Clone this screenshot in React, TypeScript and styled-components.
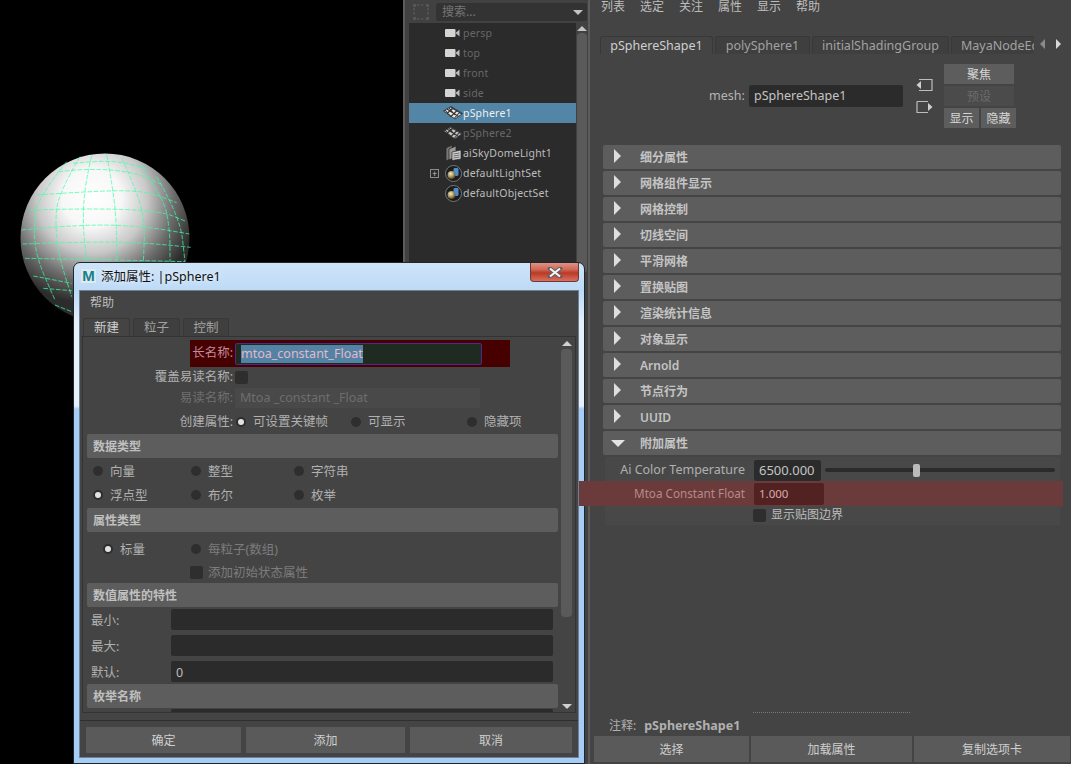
import React from 'react';

import styled, { createGlobalStyle } from 'styled-components';

const UI_FONT = '"Noto Sans", "Noto Sans CJK SC", sans-serif';

const GlobalStyle = createGlobalStyle`
  html, body {
    background: #000;
    margin: 0;
    overflow: hidden;
    padding: 0;
  }
  * {
    box-sizing: border-box;
  }
`;

const OUTLINER_ITEMS = [
  { name: 'persp', icon: 'camera', dim: true },
  { name: 'top', icon: 'camera', dim: true },
  { name: 'front', icon: 'camera', dim: true },
  { name: 'side', icon: 'camera', dim: true },
  { name: 'pSphere1', icon: 'mesh', selected: true },
  { name: 'pSphere2', icon: 'mesh', dim: true },
  { name: 'aiSkyDomeLight1', icon: 'light' },
  { name: 'defaultLightSet', icon: 'set', expandable: true },
  { name: 'defaultObjectSet', icon: 'set' },
];

const FRAMES = [
  '细分属性',
  '网格组件显示',
  '网格控制',
  '切线空间',
  '平滑网格',
  '置换贴图',
  '渲染统计信息',
  '对象显示',
  'Arnold',
  '节点行为',
  'UUID',
];

const ATTR_TABS = [
  { label: 'pSphereShape1', width: 113, active: true },
  { label: 'polySphere1', width: 95 },
  { label: 'initialShadingGroup', width: 137 },
  { label: 'MayaNodeEditorSavedTabsInfo', width: 204 },
];

// wire lines of the sphere, traced in 3x coordinates
const WIRE_LINES = [
  [[240, 80], [175, 190], [165, 285], [180, 390], [215, 500]],
  [[275, 78], [255, 160], [248, 280], [260, 395]],
  [[320, 75], [340, 180], [350, 290], [350, 395]],
  [[365, 85], [415, 190], [435, 290], [430, 395]],
  [[420, 105], [490, 200], [510, 300], [510, 395]],
  [[470, 140], [540, 260], [555, 395]],
  [[200, 95], [115, 200], [100, 290], [110, 385], [165, 510]],
  [[65, 300], [250, 282], [440, 290], [568, 312]],
  [[68, 342], [260, 335], [430, 338], [572, 352]],
  [[90, 240], [260, 235], [480, 242], [560, 275]],
  [[110, 195], [250, 185], [430, 180], [530, 218]],
  [[175, 125], [260, 115], [400, 125], [490, 165]],
  [[220, 100], [300, 92], [380, 98], [440, 118]],
  [[75, 385], [260, 388], [555, 395]],
  [[100, 438], [215, 460]],
  [[130, 475], [215, 482]],
  [[165, 525], [215, 545]],
];

const toPath = (points: number[][]): string => {
  let d = `M${points[0][0]} ${points[0][1]}`;
  for (let i = 1; i < points.length - 1; i++) {
    const midX = (points[i][0] + points[i + 1][0]) / 2;
    const midY = (points[i][1] + points[i + 1][1]) / 2;
    d += ` Q${points[i][0]} ${points[i][1]} ${midX} ${midY}`;
  }
  const last = points[points.length - 1];
  return `${d} L${last[0]} ${last[1]}`;
};

const SphereDrawing = () => (
  <StyledSphereSvg width="403" height="764" viewBox="0 0 403 764">
    <defs>
      <radialGradient
        id="sphereShade"
        gradientUnits="userSpaceOnUse"
        cx="92"
        cy="198"
        r="106"
      >
        <stop offset="0" stopColor="#ffffff" />
        <stop offset="0.28" stopColor="#f7f7f7" />
        <stop offset="0.52" stopColor="#c8c8c8" />
        <stop offset="0.78" stopColor="#6a6a6a" />
        <stop offset="1" stopColor="#2c2c2c" />
      </radialGradient>
    </defs>
    <circle cx="105" cy="238" r="84.5" fill="url(#sphereShade)" />
    <g transform="translate(0 130) scale(0.3333)">
      {WIRE_LINES.map((points, index) => (
        <path
          key={index}
          d={toPath(points)}
          fill="none"
          stroke="#3effa6"
          strokeWidth="2.2"
          strokeDasharray="14 5"
        />
      ))}
    </g>
  </StyledSphereSvg>
);

const OutlinerIcon = ({ type }: { type: string }) => {
  if (type === 'camera') {
    return (
      <svg width="16" height="12" viewBox="0 0 16 12">
        <rect x="0" y="2" width="10.5" height="8" rx="1" fill="#d4d4d4" />
        <path d="M10.5 6 L14.5 2.5 V9.5 Z" fill="#bdbdbd" />
      </svg>
    );
  }
  if (type === 'mesh') {
    return (
      <svg width="20" height="14" viewBox="0 0 20 14">
        <path d="M0.5 5 L8 0.5 L19.5 7.5 L12 13 Z" fill="#e8e8e8" stroke="#222" strokeWidth="0.8" />
        <path
          d="M4 3 L15.5 10.5 M7.5 1 L19 8 M2 4 L8 11 M6 2 L12 9 M10 2 L4 7.5 M14 4.5 L8 10.5 M17 6 L11.5 12"
          stroke="#333"
          strokeWidth="1.1"
        />
      </svg>
    );
  }
  if (type === 'light') {
    return (
      <svg width="17" height="18" viewBox="0 0 17 18">
        <path d="M1 4 L7 1 V14 L1 17 Z" fill="#777" stroke="#222" strokeWidth="0.7" />
        <path d="M4 5 L11 2 V13 L4 16 Z" fill="#999" stroke="#222" strokeWidth="0.7" />
        <path d="M7 8 L16 6 V15 L7 16.5 Z" fill="#cfcfcf" stroke="#222" strokeWidth="0.7" />
        <path d="M8.5 10 L14.5 9 M8.5 12 L14.5 11 M8.5 14 L14.5 13" stroke="#555" strokeWidth="0.8" />
      </svg>
    );
  }
  return (
    <svg width="17" height="17" viewBox="0 0 17 17">
      <defs>
        <radialGradient id="setBall" cx="0.4" cy="0.35" r="0.7">
          <stop offset="0" stopColor="#f4ecc8" />
          <stop offset="0.55" stopColor="#a8955a" />
          <stop offset="1" stopColor="#4a3f20" />
        </radialGradient>
      </defs>
      <circle cx="8.5" cy="8.5" r="8" fill="#1d1d1d" stroke="#8a8a8a" strokeWidth="0.8" />
      <rect x="8.5" y="3" width="5" height="8" rx="1.4" fill="#4f8fc9" />
      <circle cx="6.5" cy="10" r="3.9" fill="url(#setBall)" />
    </svg>
  );
};

const SnapIcon = () => (
  <svg width="18" height="18" viewBox="0 0 18 18">
    <path
      d="M5 2 H13 M5 16 H13 M2 5 V13 M16 5 V13"
      stroke="#565656"
      strokeWidth="1.6"
      strokeDasharray="2.5 1.5"
      fill="none"
    />
    <path d="M1 1 H4 V4 H1 Z M14 1 H17 V4 H14 Z M1 14 H4 V17 H1 Z M14 14 H17 V17 H14 Z" fill="#565656" />
  </svg>
);

const PortIcon = ({ flip }: { flip?: boolean }) => (
  <svg width="17" height="14" viewBox="0 0 17 14">
    {flip ? (
      <>
        <path d="M1 1.5 H12 M1 1.5 V12.5 H12" fill="none" stroke="#bdbdbd" strokeWidth="1.2" />
        <path d="M12 3 L16.5 7 L12 11 Z" fill="#d0d0d0" />
      </>
    ) : (
      <>
        <path d="M3 1.5 H16 V12.5 H3" fill="none" stroke="#bdbdbd" strokeWidth="1.2" />
        <path d="M5 3 L0.5 7 L5 11 Z" fill="#d0d0d0" />
      </>
    )}
  </svg>
);

const Outliner = () => (
  <StyledOutliner>
    <StyledSearchRow>
      <StyledSnapSlot>
        <SnapIcon />
      </StyledSnapSlot>
      <StyledSearchBox>
        搜索...
        <StyledCaret $size={5} $color="#c4c4c4" />
      </StyledSearchBox>
    </StyledSearchRow>
    <StyledTreeArea>
      <StyledTree>
        {OUTLINER_ITEMS.map((item) => (
          <StyledTreeRow key={item.name} $selected={item.selected}>
            <StyledExpandSlot>
              {item.expandable && <StyledPlusBox>+</StyledPlusBox>}
            </StyledExpandSlot>
            <StyledTreeIcon $dim={item.dim && item.icon === 'mesh'}>
              <OutlinerIcon type={item.icon} />
            </StyledTreeIcon>
            <StyledTreeLabel $dim={item.dim} $selected={item.selected}>
              {item.name}
            </StyledTreeLabel>
          </StyledTreeRow>
        ))}
      </StyledTree>
      <StyledOutlinerScroll>
        <StyledCaretUp $size={5} $color="#c4c4c4" />
        <StyledOutlinerThumb />
      </StyledOutlinerScroll>
    </StyledTreeArea>
  </StyledOutliner>
);

const AttributeEditor = () => (
  <StyledAttrPanel>
    <StyledAttrMenu>
      {['列表', '选定', '关注', '属性', '显示', '帮助'].map((label) => (
        <span key={label}>{label}</span>
      ))}
    </StyledAttrMenu>
    <StyledAttrTabRow>
      <StyledAttrTabs>
        {ATTR_TABS.map((tab) => (
          <StyledTab key={tab.label} $active={tab.active} $width={tab.width}>
            {tab.label}
          </StyledTab>
        ))}
      </StyledAttrTabs>
      <StyledTabArrows>
        <StyledCaretLeft $size={5} $color="#8a8a8a" />
        <StyledCaretRight $size={5} $color="#d8d8d8" />
      </StyledTabArrows>
    </StyledAttrTabRow>
    <StyledNodeHeader>
      <StyledNodeLabel>mesh:</StyledNodeLabel>
      <StyledNodeField>pSphereShape1</StyledNodeField>
      <StyledPortColumn>
        <PortIcon />
        <PortIcon flip />
      </StyledPortColumn>
      <StyledNodeButtons>
        <StyledSmallButton $wide>聚焦</StyledSmallButton>
        <StyledSmallButton $wide $disabled>
          预设
        </StyledSmallButton>
        <StyledSmallButton>显示</StyledSmallButton>
        <StyledSmallButton>隐藏</StyledSmallButton>
      </StyledNodeButtons>
    </StyledNodeHeader>
    <StyledFrameList>
      {FRAMES.map((label) => (
        <StyledFrame key={label}>
          <StyledFrameArrow>
            <StyledCaretRight $size={7} $color="#dedede" />
          </StyledFrameArrow>
          {label}
        </StyledFrame>
      ))}
      <StyledFrame>
        <StyledOpenArrow>
          <StyledCaret $size={7} $color="#e4e4e4" />
        </StyledOpenArrow>
        附加属性
      </StyledFrame>
      <StyledExtraSection>
        <StyledAttrRow>
          <StyledAttrLabel>Ai Color Temperature</StyledAttrLabel>
          <StyledAttrValue>6500.000</StyledAttrValue>
          <StyledSlider>
            <StyledSliderThumb />
          </StyledSlider>
        </StyledAttrRow>
        <StyledKeyedRow>
          <StyledAttrLabel $keyed>Mtoa Constant Float</StyledAttrLabel>
          <StyledAttrValue $keyed>1.000</StyledAttrValue>
        </StyledKeyedRow>
        <StyledCheckRow>
          <StyledCheckbox />
          显示贴图边界
        </StyledCheckRow>
      </StyledExtraSection>
    </StyledFrameList>
    <StyledAttrFooter>
      <StyledDots />
      <StyledNote>
        注释:<b>pSphereShape1</b>
      </StyledNote>
      <StyledFooterButtons>
        <StyledWideButton>选择</StyledWideButton>
        <StyledWideButton>加载属性</StyledWideButton>
        <StyledWideButton>复制选项卡</StyledWideButton>
      </StyledFooterButtons>
    </StyledAttrFooter>
  </StyledAttrPanel>
);

const AddAttributeDialog = () => (
  <StyledWindow>
    <StyledTitleBar>
      <StyledLogo>M</StyledLogo>
      <StyledTitle>添加属性: |pSphere1</StyledTitle>
      <StyledCloseButton>
        <svg width="16" height="11" viewBox="0 0 16 11">
          <path
            d="M3 1.5 L13 9.5 M13 1.5 L3 9.5"
            stroke="#5a5f68"
            strokeWidth="4"
            strokeLinecap="square"
          />
          <path d="M3 1.5 L13 9.5 M13 1.5 L3 9.5" stroke="#f4f4f4" strokeWidth="2.2" />
        </svg>
      </StyledCloseButton>
    </StyledTitleBar>
    <StyledClient>
      <StyledDialogMenu>帮助</StyledDialogMenu>
      <StyledDialogTabs>
        <StyledTab $active $width={47}>
          新建
        </StyledTab>
        <StyledTab $width={47}>粒子</StyledTab>
        <StyledTab $width={46}>控制</StyledTab>
      </StyledDialogTabs>
      <StyledDialogBody>
        <StyledForm>
          <StyledHighlight>
            <StyledHighlightLabel>长名称:</StyledHighlightLabel>
            <StyledNameField>
              <StyledSelectedText>mtoa_constant_Float</StyledSelectedText>
            </StyledNameField>
          </StyledHighlight>
          <StyledFormRow>
            <StyledFormLabel>覆盖易读名称:</StyledFormLabel>
            <StyledCheckbox />
          </StyledFormRow>
          <StyledFormRow $top={1}>
            <StyledFormLabel $disabled>易读名称:</StyledFormLabel>
            <StyledNiceField>Mtoa _constant _Float</StyledNiceField>
          </StyledFormRow>
          <StyledFormRow $top={4}>
            <StyledFormLabel>创建属性:</StyledFormLabel>
            <StyledRadioGrid $columns="115px 116px 1fr">
              <StyledRadioItem>
                <StyledRadio $checked />
                可设置关键帧
              </StyledRadioItem>
              <StyledRadioItem>
                <StyledRadio />
                可显示
              </StyledRadioItem>
              <StyledRadioItem>
                <StyledRadio />
                隐藏项
              </StyledRadioItem>
            </StyledRadioGrid>
          </StyledFormRow>
          <StyledFormFrame $top={2}>数据类型</StyledFormFrame>
          <StyledRadioBlock $left={10} $top={3} $columns="98px 103px 1fr">
            <StyledRadioItem>
              <StyledRadio />
              <StyledRadioText>向量</StyledRadioText>
            </StyledRadioItem>
            <StyledRadioItem>
              <StyledRadio />
              <StyledRadioText>整型</StyledRadioText>
            </StyledRadioItem>
            <StyledRadioItem>
              <StyledRadio />
              <StyledRadioText>字符串</StyledRadioText>
            </StyledRadioItem>
            <StyledRadioItem>
              <StyledRadio $checked />
              <StyledRadioText>浮点型</StyledRadioText>
            </StyledRadioItem>
            <StyledRadioItem>
              <StyledRadio />
              <StyledRadioText>布尔</StyledRadioText>
            </StyledRadioItem>
            <StyledRadioItem>
              <StyledRadio />
              <StyledRadioText>枚举</StyledRadioText>
            </StyledRadioItem>
          </StyledRadioBlock>
          <StyledFormFrame $top={3}>属性类型</StyledFormFrame>
          <StyledRadioBlock $left={20} $top={7} $columns="88px 1fr">
            <StyledRadioItem>
              <StyledRadio $checked />
              <StyledRadioText>标量</StyledRadioText>
            </StyledRadioItem>
            <StyledRadioItem $disabled>
              <StyledRadio />
              <StyledRadioText>每粒子(数组)</StyledRadioText>
            </StyledRadioItem>
          </StyledRadioBlock>
          <StyledInitialStateRow>
            <StyledCheckbox />
            <StyledRadioText>添加初始状态属性</StyledRadioText>
          </StyledInitialStateRow>
          <StyledFormFrame $top={1}>数值属性的特性</StyledFormFrame>
          <StyledRangeRow $top={2}>
            <StyledRangeLabel>最小:</StyledRangeLabel>
            <StyledRangeField />
          </StyledRangeRow>
          <StyledRangeRow $top={5}>
            <StyledRangeLabel>最大:</StyledRangeLabel>
            <StyledRangeField />
          </StyledRangeRow>
          <StyledRangeRow $top={5}>
            <StyledRangeLabel>默认:</StyledRangeLabel>
            <StyledRangeField>0</StyledRangeField>
          </StyledRangeRow>
          <StyledFormFrame $top={2}>枚举名称</StyledFormFrame>
          <StyledRangeRow $top={1}>
            <span />
            <StyledRangeField />
          </StyledRangeRow>
        </StyledForm>
        <StyledDialogScroll>
          <StyledCaretUp $size={5} $color="#d0d0d0" />
          <StyledDialogThumb />
          <StyledCaret $size={5} $color="#d0d0d0" />
        </StyledDialogScroll>
      </StyledDialogBody>
      <StyledDialogFooter>
        <StyledWideButton>确定</StyledWideButton>
        <StyledWideButton>添加</StyledWideButton>
        <StyledWideButton>取消</StyledWideButton>
      </StyledDialogFooter>
    </StyledClient>
  </StyledWindow>
);

const App = (): JSX.Element => (
  <>
    <GlobalStyle />
    <StyledDesktop>
      <StyledViewport>
        <SphereDrawing />
      </StyledViewport>
      <Outliner />
      <AttributeEditor />
      <AddAttributeDialog />
    </StyledDesktop>
  </>
);

const StyledDesktop = styled.div`
  color: #bdbdbd;
  display: grid;
  font-family: ${UI_FONT};
  font-size: 12px;
  grid-template-columns: 403px 187px 481px;
  height: 764px;
  line-height: 1;
  overflow: hidden;
  position: relative;
  width: 1071px;
`;

const StyledViewport = styled.div`
  background: #000;
  position: relative;
`;

const StyledSphereSvg = styled.svg`
  display: block;
`;

const StyledCaret = styled.i<{ $size: number; $color: string }>`
  border-left: ${({ $size }) => $size}px solid transparent;
  border-right: ${({ $size }) => $size}px solid transparent;
  border-top: ${({ $size }) => $size}px solid ${({ $color }) => $color};
  display: block;
  height: 0;
  width: 0;
`;

const StyledCaretUp = styled.i<{ $size: number; $color: string }>`
  border-bottom: ${({ $size }) => $size}px solid ${({ $color }) => $color};
  border-left: ${({ $size }) => $size}px solid transparent;
  border-right: ${({ $size }) => $size}px solid transparent;
  display: block;
  height: 0;
  width: 0;
`;

const StyledCaretRight = styled.i<{ $size: number; $color: string }>`
  border-bottom: ${({ $size }) => $size}px solid transparent;
  border-left: ${({ $size }) => $size}px solid ${({ $color }) => $color};
  border-top: ${({ $size }) => $size}px solid transparent;
  display: block;
  height: 0;
  width: 0;
`;

const StyledCaretLeft = styled.i<{ $size: number; $color: string }>`
  border-bottom: ${({ $size }) => $size}px solid transparent;
  border-right: ${({ $size }) => $size}px solid ${({ $color }) => $color};
  border-top: ${({ $size }) => $size}px solid transparent;
  display: block;
  height: 0;
  width: 0;
`;

/* outliner */

const StyledOutliner = styled.div`
  background: #414141;
  border-left: 2px solid #5c5c5c;
  border-right: 2px solid #5c5c5c;
  display: flex;
  flex-direction: column;
  height: 764px;
  padding-left: 4px;
`;

const StyledSearchRow = styled.div`
  align-items: center;
  display: flex;
  height: 23px;
  padding-top: 1px;
`;

const StyledSnapSlot = styled.div`
  display: flex;
  justify-content: center;
  width: 27px;
  padding-right: 4px;
`;

const StyledSearchBox = styled.div`
  align-items: center;
  background: #333333;
  border-radius: 2px;
  color: #767676;
  display: flex;
  font-size: 12px;
  height: 18px;
  justify-content: space-between;
  padding: 0 4px 0 6px;
  width: 151px;
`;

const StyledTreeArea = styled.div`
  display: flex;
  flex: 1;
`;

const StyledTree = styled.div`
  background: #2b2b2b;
  width: 168px;
`;

const StyledTreeRow = styled.div<{ $selected?: boolean }>`
  align-items: center;
  background: ${({ $selected }) => ($selected ? '#5285a6' : 'transparent')};
  display: flex;
  height: 20px;
  padding-left: 21px;
`;

const StyledExpandSlot = styled.div`
  flex: 0 0 13px;
`;

const StyledPlusBox = styled.div`
  align-items: center;
  border: 1px solid #8c8c8c;
  color: #bdbdbd;
  display: flex;
  font-size: 9px;
  height: 9px;
  justify-content: center;
  width: 9px;
`;

const StyledTreeIcon = styled.div<{ $dim?: boolean }>`
  align-items: center;
  display: flex;
  flex: 0 0 20px;
  height: 20px;
  justify-content: center;
  opacity: ${({ $dim }) => ($dim ? 0.8 : 1)};
`;

const StyledTreeLabel = styled.span<{ $dim?: boolean; $selected?: boolean }>`
  color: ${({ $dim, $selected }) =>
    $selected ? '#f0f0f0' : $dim ? '#686868' : '#bdbdbd'};
  font-size: 10.5px;
  letter-spacing: 0.2px;
`;

const StyledOutlinerScroll = styled.div`
  align-items: center;
  display: flex;
  flex: 0 0 12px;
  flex-direction: column;
  gap: 2px;
  padding-top: 3px;
`;

const StyledOutlinerThumb = styled.div`
  background: #5a5a5a;
  border-radius: 4px;
  height: 240px;
  width: 10px;
`;

/* attribute editor */

const StyledAttrPanel = styled.div`
  background: #444444;
  display: flex;
  flex-direction: column;
  height: 764px;
`;

const StyledAttrMenu = styled.div`
  color: #bdbdbd;
  display: flex;
  gap: 15px;
  height: 15px;
  padding: 1px 0 0 11px;
`;

const StyledAttrTabRow = styled.div`
  display: flex;
  margin-top: 21px;
  padding-left: 10px;
`;

const StyledAttrTabs = styled.div`
  display: flex;
  gap: 2px;
  overflow: hidden;
  width: 434px;
`;

const StyledTab = styled.div<{ $active?: boolean; $width: number }>`
  background: ${({ $active }) => ($active ? '#444444' : '#3f3f3f')};
  border: 1px solid #383838;
  border-bottom: none;
  border-radius: 3px 3px 0 0;
  color: ${({ $active }) => ($active ? '#cfcfcf' : '#a2a2a2')};
  flex: 0 0 ${({ $width }) => $width}px;
  font-size: 12.5px;
  height: 18px;
  line-height: 17px;
  overflow: hidden;
  text-align: center;
  white-space: nowrap;
`;

const StyledTabArrows = styled.div`
  align-items: center;
  display: flex;
  gap: 11px;
  height: 18px;
  margin-left: 6px;
  padding-bottom: 3px;
`;

const StyledNodeHeader = styled.div`
  align-items: center;
  display: flex;
  margin-top: 10px;
  padding-left: 119px;
`;

const StyledNodeLabel = styled.span`
  color: #b4b4b4;
  font-size: 12.5px;
  width: 40px;
`;

const StyledNodeField = styled.div`
  background: #2b2b2b;
  border-radius: 2px;
  color: #c4c4c4;
  font-size: 12.5px;
  height: 22px;
  line-height: 21px;
  padding-left: 5px;
  width: 154px;
`;

const StyledPortColumn = styled.div`
  display: flex;
  flex-direction: column;
  gap: 8px;
  margin-left: 13px;
  width: 17px;
`;

const StyledNodeButtons = styled.div`
  display: flex;
  flex-wrap: wrap;
  gap: 2px;
  margin-left: 11px;
  width: 72px;
`;

const StyledSmallButton = styled.div<{ $wide?: boolean; $disabled?: boolean }>`
  background: ${({ $disabled }) => ($disabled ? '#4b4b4b' : '#5d5d5d')};
  color: ${({ $disabled }) => ($disabled ? '#6c6c6c' : '#d6d6d6')};
  flex: 0 0 ${({ $wide }) => ($wide ? 70 : 35)}px;
  height: 20px;
  line-height: 21px;
  text-align: center;
`;

const StyledFrameList = styled.div`
  display: flex;
  flex-direction: column;
  gap: 2px;
  margin-top: 17px;
  padding-left: 13px;
  width: 471px;
`;

const StyledFrame = styled.div`
  align-items: center;
  background: #5d5d5d;
  border-radius: 2px;
  color: #c4c4c4;
  display: flex;
  font-size: 12px;
  font-weight: 600;
  height: 24px;
  padding: 2px 0 0 37px;
  position: relative;
`;

const StyledFrameArrow = styled.span`
  left: 11px;
  position: absolute;
  top: 4px;
`;

const StyledOpenArrow = styled.span`
  left: 8px;
  position: absolute;
  top: 9px;
`;

const StyledExtraSection = styled.div`
  background: #484848;
  display: flex;
  flex-direction: column;
  height: 68px;
  margin-left: 2px;
  padding-top: 2px;
  width: 455px;
`;

const StyledAttrRow = styled.div`
  align-items: center;
  display: flex;
  flex: 0 0 22px;
  gap: 9px;
`;

const StyledKeyedRow = styled(StyledAttrRow)`
  flex: 0 0 25px;
  position: relative;
  z-index: 3;

  &::before {
    background: #6b3a3a;
    bottom: 0;
    content: '';
    left: -26px;
    position: absolute;
    right: -3px;
    top: 0;
    z-index: -1;
  }
`;

const StyledAttrLabel = styled.span<{ $keyed?: boolean }>`
  color: ${({ $keyed }) => ($keyed ? '#b58a8a' : '#b0b0b0')};
  flex: 0 0 140px;
  font-size: ${({ $keyed }) => ($keyed ? 11.7 : 12.5)}px;
  text-align: right;
`;

const StyledAttrValue = styled.div<{ $keyed?: boolean }>`
  background: ${({ $keyed }) => ($keyed ? '#522222' : '#2b2b2b')};
  border-radius: 2px;
  color: ${({ $keyed }) => ($keyed ? '#d8aaaa' : '#c4c4c4')};
  flex: 0 0 ${({ $keyed }) => ($keyed ? 70 : 67)}px;
  font-size: ${({ $keyed }) => ($keyed ? 11.5 : 13)}px;
  height: ${({ $keyed }) => ($keyed ? 22 : 21)}px;
  line-height: 21px;
  padding-left: 5px;
`;

const StyledSlider = styled.div`
  background: #2b2b2b;
  border-radius: 2px;
  height: 4px;
  margin-left: -5px;
  position: relative;
  width: 230px;
`;

const StyledSliderThumb = styled.div`
  background: #bababa;
  border-radius: 2px;
  height: 13px;
  left: 88px;
  position: absolute;
  top: -4px;
  width: 7px;
`;

const StyledCheckRow = styled.div`
  align-items: center;
  display: flex;
  font-size: 12px;
  gap: 5px;
  height: 18px;
  padding-left: 148px;
`;

const StyledCheckbox = styled.div`
  background: #2e2e2e;
  border-radius: 2px;
  flex: 0 0 13px;
  height: 13px;
  width: 13px;
`;

const StyledAttrFooter = styled.div`
  display: flex;
  flex-direction: column;
  margin-top: auto;
  padding-bottom: 2px;
`;

const StyledDots = styled.div`
  border-top: 1px dotted #777777;
  margin-left: 163px;
  width: 157px;
`;

const StyledNote = styled.div`
  color: #b0b0b0;
  display: flex;
  gap: 8px;
  height: 23px;
  padding: 7px 0 0 19px;

  b {
    font-size: 12.5px;
    font-weight: 700;
  }
`;

const StyledFooterButtons = styled.div`
  display: grid;
  gap: 2px;
  grid-template-columns: 155px 161px 156px;
  padding-left: 4px;
`;

const StyledWideButton = styled.div`
  background: #5a5a5a;
  color: #cfcfcf;
  height: 26px;
  line-height: 27px;
  text-align: center;
`;

/* add attribute window */

const StyledWindow = styled.div`
  background: linear-gradient(
    #cfe4f8 0,
    #bcdaf7 28px,
    #e6f0fb 60px,
    #e6f0fb 143px,
    #a6cdf5 146px,
    #a6cdf5 100%
  );
  border: 1px solid #20262c;
  border-radius: 7px 7px 0 0;
  display: flex;
  flex-direction: column;
  height: 502px;
  left: 73px;
  padding: 0 5px 5px;
  position: absolute;
  top: 262px;
  width: 512px;
  z-index: 2;
`;

const StyledTitleBar = styled.div`
  display: flex;
  flex: 0 0 27px;
`;

const StyledLogo = styled.div`
  background: #dfe9ee;
  color: #15808c;
  font-family: 'Liberation Sans', sans-serif;
  font-size: 15px;
  font-weight: 700;
  height: 14px;
  line-height: 14px;
  margin: 6px 0 0 2px;
  text-align: center;
  width: 15px;
`;

const StyledTitle = styled.div`
  color: #111111;
  font-size: 12.5px;
  line-height: 27px;
  margin-left: 5px;
  text-shadow: 0 0 6px #ffffff;
`;

const StyledCloseButton = styled.div`
  align-items: center;
  background: linear-gradient(#dd9384 0, #d26a58 35%, #b93a26 55%, #d9705d 100%);
  border: 1px solid #6b3a36;
  border-radius: 0 0 4px 4px;
  border-top: none;
  display: flex;
  height: 19px;
  justify-content: center;
  margin-left: auto;
  width: 49px;
`;

const StyledClient = styled.div`
  background: #444444;
  border: 1px solid #6f8191;
  display: flex;
  flex: 1;
  flex-direction: column;
  min-height: 0;
`;

const StyledDialogMenu = styled.div`
  flex: 0 0 27px;
  line-height: 24px;
  padding-left: 10px;
`;

const StyledDialogTabs = styled.div`
  display: flex;
  gap: 3px;
  padding-left: 3px;
`;

const StyledDialogBody = styled.div`
  background: #444444;
  border: 1px solid #333333;
  display: flex;
  flex: 0 0 377px;
  margin: 0 2px;
  overflow: hidden;
`;

const StyledForm = styled.div`
  display: flex;
  flex: 0 0 476px;
  flex-direction: column;
  font-size: 12.5px;
  height: 375px;
  overflow: hidden;
`;

const StyledHighlight = styled.div`
  align-items: center;
  background: #470000;
  display: flex;
  flex: 0 0 27px;
  gap: 2px;
  margin: 3px 0 0 107px;
  width: 320px;
`;

const StyledHighlightLabel = styled.span`
  color: #c28a9a;
  flex: 0 0 43px;
  text-align: right;
  white-space: nowrap;
`;

const StyledNameField = styled.div`
  background: #1f2a20;
  border: 1px solid #4b2a8c;
  border-radius: 2px;
  color: #e0b0c0;
  height: 22px;
  line-height: 18px;
  padding: 1px 0 0 5px;
  width: 247px;
`;

const StyledSelectedText = styled.span`
  background: #5283a5;
  color: #e4b8c8;
  display: inline-block;
  height: 18px;
  line-height: 18px;
`;

const StyledFormRow = styled.div<{ $top?: number }>`
  align-items: center;
  display: grid;
  flex: 0 0 20px;
  gap: 2px;
  grid-template-columns: 150px 1fr;
  margin-top: ${({ $top = 0 }) => $top}px;
`;

const StyledFormLabel = styled.span<{ $disabled?: boolean }>`
  color: ${({ $disabled }) => ($disabled ? '#6e6e6e' : '#b0b0b0')};
  text-align: right;
  white-space: nowrap;
`;

const StyledNiceField = styled.div`
  background: #494949;
  color: #6e6e6e;
  height: 20px;
  line-height: 20px;
  padding-left: 5px;
  width: 245px;
`;

const StyledRadioGrid = styled.div<{ $columns: string }>`
  display: grid;
  grid-template-columns: ${({ $columns }) => $columns};
  padding-left: 1px;
`;

const StyledRadioBlock = styled.div<{ $left: number; $top: number; $columns: string }>`
  display: grid;
  flex: 0 0 auto;
  grid-auto-rows: 20px;
  grid-template-columns: ${({ $columns }) => $columns};
  margin-top: ${({ $top }) => $top}px;
  padding-left: ${({ $left }) => $left}px;
  row-gap: 4px;
`;

const StyledRadioItem = styled.div<{ $disabled?: boolean }>`
  align-items: center;
  color: ${({ $disabled }) => ($disabled ? '#7c7c7c' : '#b0b0b0')};
  display: flex;
  gap: 7px;
`;

const StyledRadioText = styled.span`
  padding-top: 2px;
`;

const StyledRadio = styled.span<{ $checked?: boolean }>`
  background: #2e2e2e;
  border-radius: 50%;
  flex: 0 0 10px;
  height: 10px;
  position: relative;

  &::after {
    background: #e2e2e2;
    border-radius: 50%;
    content: '';
    display: ${({ $checked }) => ($checked ? 'block' : 'none')};
    height: 6px;
    left: 2px;
    position: absolute;
    top: 2px;
    width: 6px;
  }
`;

const StyledFormFrame = styled.div<{ $top?: number }>`
  background: #5d5d5d;
  border-radius: 2px;
  color: #c0c0c0;
  flex: 0 0 24px;
  font-size: 12px;
  font-weight: 600;
  height: 24px;
  line-height: 22px;
  margin: ${({ $top = 0 }) => $top}px 0 0 4px;
  padding: 2px 0 0 6px;
  width: 471px;
`;

const StyledInitialStateRow = styled.div`
  align-items: center;
  color: #7c7c7c;
  display: flex;
  flex: 0 0 20px;
  gap: 5px;
  margin-top: 3px;
  padding-left: 107px;
`;

const StyledRangeRow = styled.div<{ $top: number }>`
  align-items: center;
  color: #b0b0b0;
  display: grid;
  flex: 0 0 21px;
  grid-template-columns: 80px 382px;
  margin-top: ${({ $top }) => $top}px;
  padding-left: 8px;
  white-space: nowrap;
`;

const StyledRangeLabel = styled.span`
  padding-top: 4px;
`;

const StyledRangeField = styled.div`
  background: #2b2b2b;
  border-radius: 2px;
  color: #bdbdbd;
  height: 21px;
  line-height: 23px;
  padding-left: 5px;
`;

const StyledDialogScroll = styled.div`
  align-items: center;
  display: flex;
  flex: 0 0 11px;
  flex-direction: column;
  margin-left: 2px;
  padding: 4px 0 3px;
`;

const StyledDialogThumb = styled.div`
  background: #5a5a5a;
  border-radius: 4px;
  flex: 0 0 268px;
  margin: 3px 0 auto;
  width: 11px;
`;

const StyledDialogFooter = styled.div`
  border-top: 1px solid #2f2f2f;
  display: grid;
  gap: 5px;
  grid-template-columns: 155px 159px 162px;
  margin-top: 7px;
  padding: 6px 0 0 6px;
`;

export default App;
